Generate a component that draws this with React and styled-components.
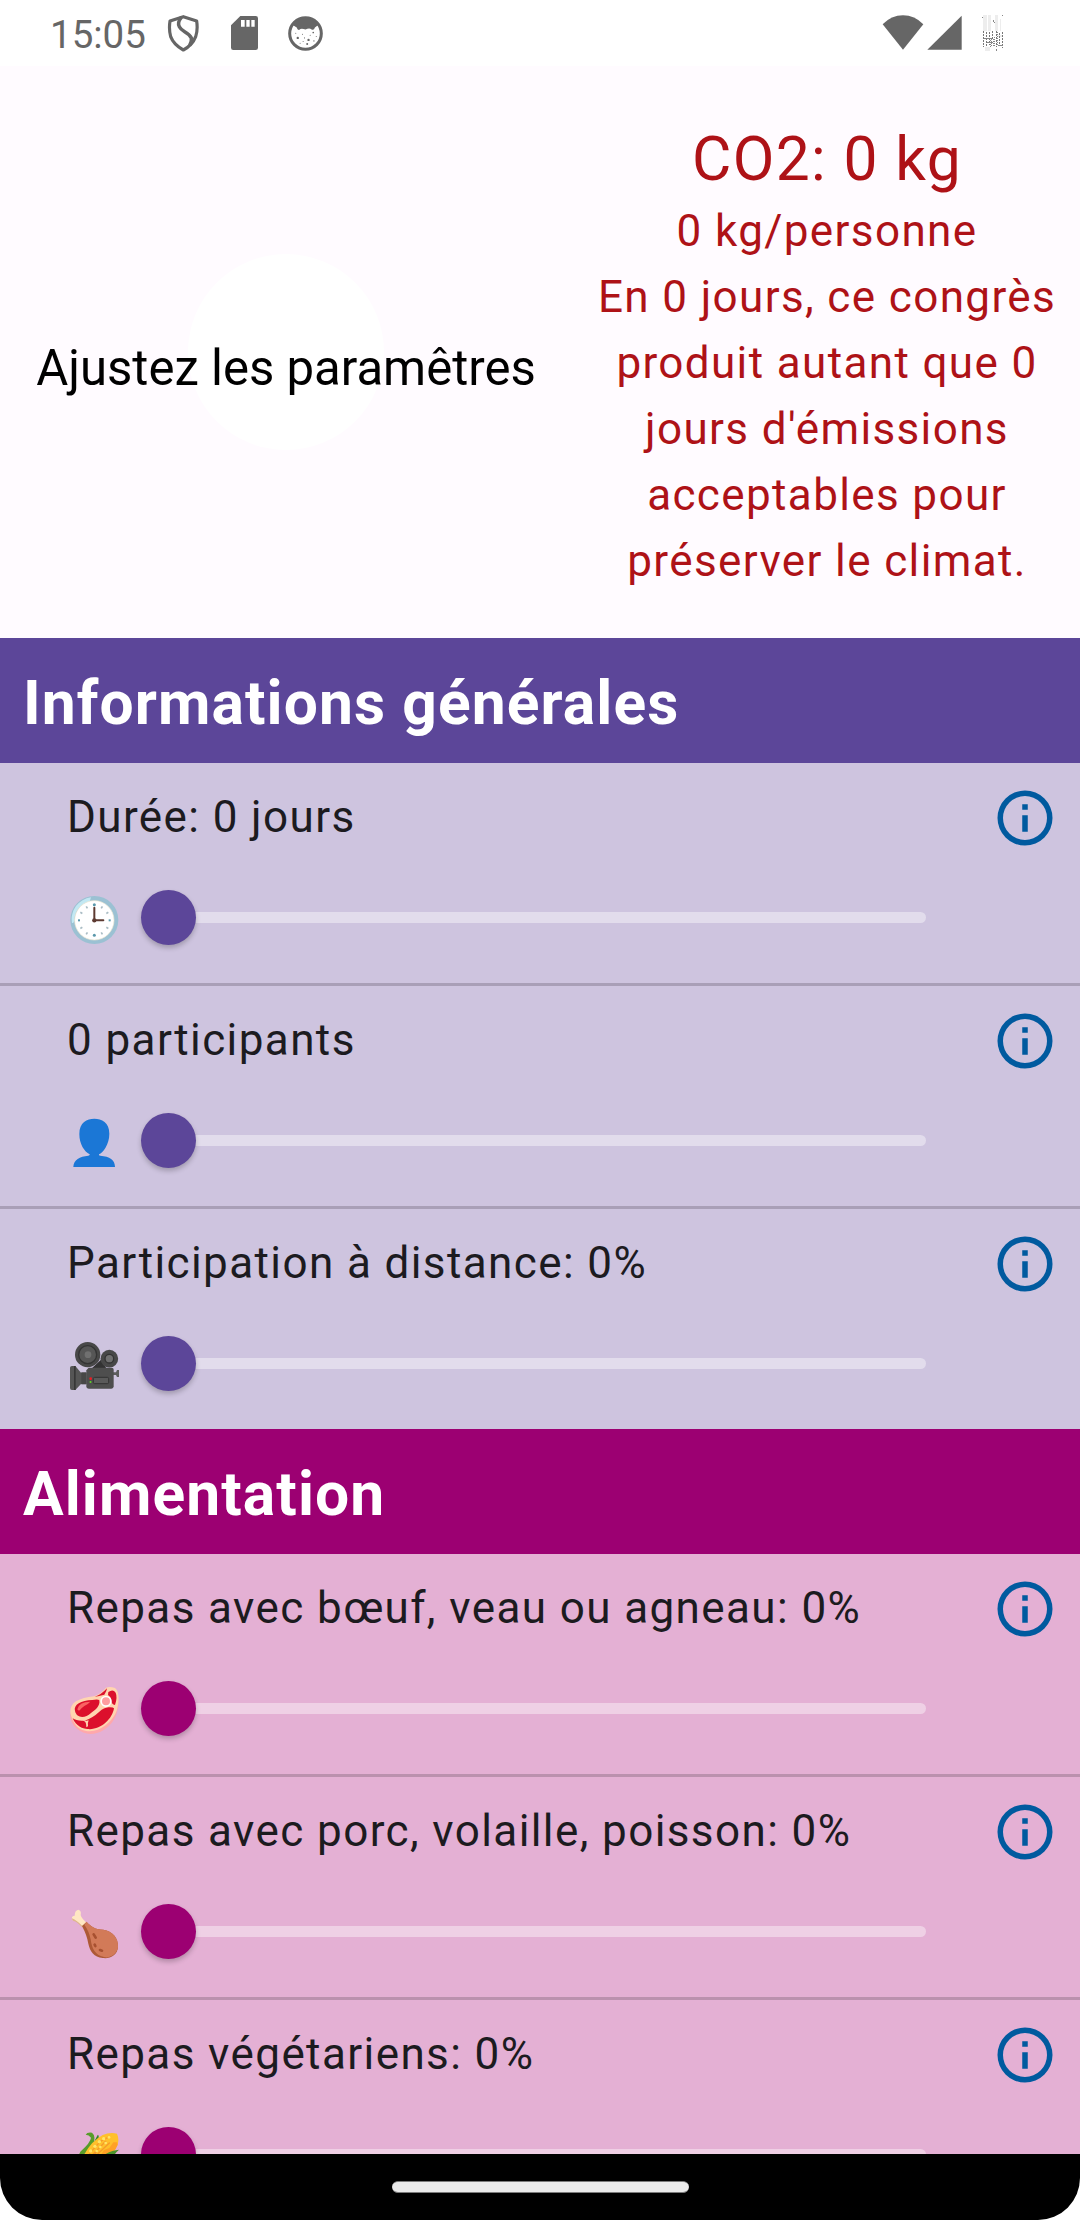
import React from 'react';
import styled, { createGlobalStyle } from 'styled-components';

const GlobalStyle = createGlobalStyle`
  * { box-sizing: border-box; }
  body { margin: 0; background: #fff; font-family: Roboto, "Noto Sans", sans-serif; }
  svg { display: block; flex: none; }
`;

const Screen = styled.div`
  width: 1080px;
  height: 2220px;
  display: flex;
  flex-direction: column;
  overflow: hidden;
  background: #fff;
`;

const StatusBar = styled.header`
  flex: none;
  height: 66px;
  display: flex;
  justify-content: space-between;
  padding: 0 76px 0 50px;
  color: #666;
`;

const StatusGroup = styled.div`
  display: flex;
  align-items: flex-start;
  padding-top: 14px;
`;

const Clock = styled.span`
  width: 117px;
  font-size: 38.5px;
  line-height: 41px;
`;

const StatusIcon = styled.svg`
  margin-top: ${(p) => p.$drop || 0}px;
  margin-right: ${(p) => p.$after || 0}px;
`;

const Content = styled.main`
  flex: 1;
  min-height: 0;
  overflow: hidden;
  display: flex;
  flex-direction: column;
  background: #fffbff;
`;

const Summary = styled.section`
  flex: none;
  display: flex;
  height: 572px;
`;

const ChartArea = styled.div`
  width: 572px;
  display: grid;
  place-items: center;
`;

const ChartHole = styled.div`
  grid-area: 1 / 1;
  width: 196px;
  height: 196px;
  border-radius: 50%;
  background: #fff;
`;

const ChartMessage = styled.div`
  grid-area: 1 / 1;
  padding-top: 32px;
  font-size: 49.1px;
  line-height: 58px;
  white-space: nowrap;
  color: #000;
`;

const Figures = styled.div`
  flex: 1;
  padding: 55px 19px 0 21px;
  text-align: center;
  color: #ae1217;
`;

const Total = styled.div`
  font-size: 60.5px;
  line-height: 77px;
  letter-spacing: 1.375px;
`;

const Detail = styled.p`
  margin: 0;
  font-size: 44px;
  line-height: 66px;
  letter-spacing: 1.375px;
`;

const SectionTitle = styled.h2`
  flex: none;
  margin: 0;
  height: 125px;
  padding: 25px 23px;
  background: ${(p) => p.$color};
  color: #fff;
  font-size: 60.5px;
  font-weight: 700;
  line-height: 82px;
  letter-spacing: 1.1px;
`;

const Rows = styled.div`
  flex: none;
  background: ${(p) => p.$color};
`;

const Row = styled.div`
  display: flex;
  justify-content: space-between;
  height: ${(p) => (p.$last ? 220 : 223)}px;
  padding: 21px 22px 0 66px;
  border-bottom: ${(p) => (p.$last ? '0' : `3px solid ${p.$line}`)};
`;

const Setting = styled.div`
  width: 860px;
`;

const Label = styled.div`
  padding-left: 1px;
  font-size: 44px;
  line-height: 66px;
  letter-spacing: 1.4px;
  white-space: nowrap;
  color: #1c1b1f;
`;

const SliderLine = styled.div`
  display: flex;
  align-items: center;
  height: 131px;
  margin-top: 2px;
`;

const Emoji = styled.svg`
  width: 50px;
  height: 50px;
  margin: 5px 22px 0 3px;
`;

const Thumb = styled.div`
  position: relative;
  flex: none;
  width: 55px;
  height: 55px;
  border-radius: 50%;
  background: ${(p) => p.$color};
  box-shadow: 0 3px 5px rgba(0, 0, 0, 0.22);
`;

const Track = styled.div`
  flex: 1;
  height: 11px;
  margin-left: -20px;
  border-radius: 6px;
  background: ${(p) => p.$color};
`;

const InfoButton = styled.button`
  width: 66px;
  height: 66px;
  margin-top: 1px;
  padding: 0;
  border: 0;
  background: none;
  color: #005a9f;
`;

const NavBar = styled.footer`
  flex: none;
  height: 66px;
  display: flex;
  align-items: center;
  justify-content: center;
  background: #000;
  border-radius: 0 0 42px 42px;
`;

const HomeHandle = styled.div`
  width: 297px;
  height: 12px;
  border-radius: 6px;
  background: #ebebeb;
  border: solid #7c7c7c;
  border-width: 1px 0;
`;

const ClockArt = () => (
  <>
    <circle cx="76" cy="75" r="72" fill="#9bc1d3" />
    <path d="M9 84 A66 66 0 0 1 66 7 L62 20 A56 56 0 0 0 17 66 Q16 84 11 84Z" fill="#c2e8f3" />
    <circle cx="76" cy="76" r="59" fill="#fff" stroke="#f2e9d2" strokeWidth="2" />
    <g fill="#5a98ab">
      <circle cx="76" cy="29" r="4.500" /><circle cx="76" cy="121" r="4.500" />
      <rect x="27" y="73" width="6" height="6" /><rect x="119" y="73" width="6" height="6" />
    </g>
    <g fill="#a9bcc4">
      {[30, 60, 120, 150, 210, 240, 300, 330].map((a) => (
        <rect key={a} x="73.500" y="27.500" width="5" height="7" transform={`rotate(${a} 76 76)`} />
      ))}
    </g>
    <path d="M76 38V76H103" fill="none" stroke="#5d3a31" strokeWidth="6" strokeLinecap="round" strokeLinejoin="round" />
    <circle cx="76" cy="76" r="6.500" fill="#5d3a31" />
  </>
);

const PersonArt = () => (
  <path
    fill="#1b77d6"
    d="M76 2C98 2 121 12 121 47C121 80 102 103 90 109Q88 113 94 113C122 115 138 126 138 146V147H13V146C14 126 32 115 58 113Q64 112 62 109C46 101 31 78 31 48C31 13 54 2 76 2Z"
  />
);

const CameraArt = () => (
  <>
    <path d="M70 80L96 56L112 82H72Z" fill="#333" />
    <circle cx="56" cy="41" r="38" fill="#484848" />
    <circle cx="56" cy="41" r="27" fill="#565656" stroke="#343434" strokeWidth="4" />
    <circle cx="57" cy="41" r="10" fill="#707070" />
    <circle cx="121" cy="53" r="26.500" fill="#484848" />
    <circle cx="121" cy="53" r="13" fill="#707070" stroke="#333" strokeWidth="4" />
    <path d="M3 80Q3 75 9 75H19L36 95H53V129H36L19 147H9Q3 147 3 141Z" fill="#555" />
    <path d="M15 75H20V147H15Z" fill="#373737" />
    <rect x="37" y="94" width="15" height="36" fill="#474747" />
    <path d="M132 94H141L144 87H150V108H144L141 102H132Z" fill="#5c5c5c" />
    <path d="M59 80H128Q134 80 134 86V136Q134 143 127 143H60Q52 143 52 136V88Z" fill="#4e4e4e" />
    <rect x="73" y="109" width="46" height="19" rx="4" fill="#5a5a5a" stroke="#333" strokeWidth="3" />
    <circle cx="65" cy="113" r="4" fill="#ef1c24" />
    <rect x="62" y="120" width="5" height="6" fill="#5dcc28" />
  </>
);

const MeatArt = () => (
  <>
    <path d="M5 78Q0 108 22 127Q58 158 103 133Q143 108 148 58Q152 18 128 4Z" fill="#ffa8ab" />
    <path d="M75 31Q98 22 111 5Q122 0 138 6C152 16 151 48 143 74C128 113 84 143 49 134C24 130 16 112 9 96C0 76 3 58 21 46Q42 34 75 31Z" fill="#ffd5b0" />
    <path d="M77 32Q96 27 114 7Q113 17 106 26L87 31Z" fill="#dc102c" />
    <path d="M18 75C13 56 36 43 70 42Q88 39 91 43C94 61 79 72 66 81C48 98 23 97 18 75Z" fill="#dc102c" />
    <path d="M118 18Q132 8 140 20Q146 34 138 57Q127 55 127 42Q125 31 117 27Z" fill="#dc102c" />
    <path d="M11 97Q23 106 47 104Q72 95 91 77Q105 65 118 64Q132 63 135 67C130 100 93 134 55 129C30 127 17 111 11 97Z" fill="#dc102c" />
    <path d="M41 102Q52 106 59 103Q56 108 57 121L52 124Q52 112 49 108Z" fill="#ffd5b0" />
    <path d="M25 70Q29 48 64 47Q58 54 46 60Q36 67 33 72Q28 76 25 70Z" fill="#fa6262" />
    <circle cx="111" cy="46" r="14.500" fill="#ff9d9f" stroke="#fff" strokeWidth="5" />
  </>
);

const DrumstickArt = () => (
  <>
    <path d="M9 29Q7 21 17 20Q17 4 28 2Q38 5 35 17Q34 23 54 43L40 55Q27 37 18 35Q10 36 9 29Z" fill="#ffe7c3" />
    <path d="M9 28Q20 32 43 53L39 55Q25 40 17 37Q9 36 9 28Z" fill="#dfb68c" />
    <path d="M53 38Q58 46 75 56Q82 60 103 62C130 65 149 88 147 114C145 139 124 150 101 147C75 144 63 128 58 104Q54 79 39 51Z" fill="#ad5936" />
    <path d="M53 38Q58 46 75 56Q82 60 103 62C130 65 149 88 147 114C145 133 126 147 108 145C77 140 68 116 65 91Q60 66 46 47Z" fill="#d27a58" />
    <g stroke="#a75030" strokeWidth="8" strokeLinecap="round">
      <path d="M74 76L80 86" /><path d="M77 107L79 111" /><path d="M93 123L99 125" />
    </g>
  </>
);

const CornArt = () => (
  <>
    <path d="M50 8Q54 0 69 2Q78 9 76 22L75 31L86 8Q91 11 88 23L80 45L50 80L20 90L34 59Q65 31 66 17Q60 8 50 8Z" fill="#579c2a" />
    <path d="M76 29L88 9V28L62 63H48L68 44Z" fill="#2b7b35" />
    <path d="M41 76Q65 28 101 9Q123 0 144 5Q151 21 146 38Q132 70 102 92H32Z" fill="#ffc02b" />
    <path d="M146 38Q135 66 102 92H80L105 54L121 48L133 31H144Z" fill="#ffa126" />
    <g stroke="#f69a2b" strokeWidth="4" strokeLinecap="round">
      <path d="M62 64L88 35M68 71L110 28M84 68L121 33M62 84L82 61M94 28L119 15" />
    </g>
    <g fill="#ffe568">
      <circle cx="91" cy="29" r="5" /><circle cx="78" cy="43" r="5" /><circle cx="65" cy="57" r="5" />
      <circle cx="104" cy="20" r="5" /><circle cx="94" cy="45" r="4" /><circle cx="83" cy="57" r="4" />
      <circle cx="120" cy="16" r="4" /><circle cx="110" cy="33" r="4" />
    </g>
    <path d="M150 53Q131 54 110 66L90 90H128Q133 67 150 53Z" fill="#4b942b" />
  </>
);

const InfoIcon = () => (
  <svg width="66" height="66" viewBox="0 0 24 24" fill="currentColor">
    <path d="M11 7h2v2h-2zM11 11h2v6h-2zM12 2a10 10 0 1 0 0 20a10 10 0 0 0 0-20zm0 18a8 8 0 1 1 0-16a8 8 0 0 1 0 16z" />
  </svg>
);

const ShieldIcon = () => (
  <StatusIcon width="32" height="38" viewBox="0 0 96 114" fill="none" stroke="currentColor" strokeWidth="9.500" strokeLinejoin="round" $after={32}>
    <path d="M49 8L89 21Q93 48 86 68Q76 94 49 108Q20 92 11 68Q5 46 9 21Z" />
    <path d="M43 10Q30 26 37 38Q41 46 53 53Q69 62 73 72Q75 82 68 94" strokeWidth="10.500" />
  </StatusIcon>
);

const SdIcon = () => (
  <StatusIcon width="27" height="34" viewBox="0 0 81 102" $after={30} $drop={2}>
    <path d="M28 0H74Q81 0 81 7V95Q81 102 74 102H7Q0 102 0 95V28Z" fill="currentColor" />
    <path d="M30 12H41V32H30ZM46 12H56V32H46ZM61 12H71V32H61Z" fill="#fff" />
  </StatusIcon>
);

const FaceIcon = () => (
  <StatusIcon width="35" height="35" viewBox="0 0 104 104" $drop={2}>
    <circle cx="52" cy="52" r="47" fill="#fff" stroke="currentColor" strokeWidth="9" />
    <path d="M14 27Q32 5 52 5Q73 5 90 27L80 34Q77 44 70 40Q64 35 52 40Q38 35 34 41Q28 43 26 34Z" fill="currentColor" />
    <g fill="currentColor">
      <circle cx="29" cy="65" r="3.500" /><circle cx="61" cy="71" r="3.500" /><circle cx="57" cy="83" r="3" />
      <circle cx="75" cy="49" r="2.500" /><circle cx="77" cy="74" r="2" /><circle cx="43" cy="54" r="1.500" />
      <circle cx="23" cy="51" r="1.500" /><circle cx="36" cy="81" r="1.500" /><circle cx="49" cy="65" r="1.500" />
      <circle cx="66" cy="57" r="1.500" /><circle cx="84" cy="61" r="1.500" /><circle cx="45" cy="76" r="1.500" />
    </g>
  </StatusIcon>
);

const WifiIcon = () => (
  <StatusIcon width="42" height="35" viewBox="0 0 126 105" $after={3} $drop={1}>
    <path d="M2 28Q28 1 63 1Q98 1 124 28L63 104Z" fill="currentColor" />
  </StatusIcon>
);

const SignalIcon = () => (
  <StatusIcon width="35" height="35" viewBox="0 0 105 105" $after={20} $drop={1}>
    <path d="M104 2V104H1Z" fill="currentColor" />
  </StatusIcon>
);

const BatteryIcon = () => (
  <StatusIcon width="22" height="37" viewBox="0 0 22 37" shapeRendering="crispEdges" $drop={1}>
    <path d="M1 0h4v16h-4zM6 0h3v16h-3zM13 0h3v16h-3zM3 32h5v4h-5zM16 20h5v2h-5zM18 4h1v12h-1z" fill="#ededed" />
    <path
      d="M1.500 16V32M4.500 17V31M7.500 17V30M10.500 16V24M14.500 16V32M17.500 18V29M20.500 17V33"
      stroke="#777" strokeDasharray="2 1" fill="none"
    />
    <path d="M8.500 25V32M9.500 24V32M11.500 24V32M12.500 22V31M15.500 17V31" stroke="#888" strokeDasharray="1 1" fill="none" />
    <path d="M0 2h1v1h-1zM20 0h1v1h-1zM11 5h1v2h-1zM12 7h1v1h-1zM2 23h8v1h-8zM5 27h6v1h-6zM14 34h1v2h-1zM16 30h5v1h-5z" fill="#888" />
  </StatusIcon>
);

const sections = [
  {
    title: 'Informations générales',
    main: '#5c4699',
    light: '#cec4df',
    line: '#a99fb7',
    track: '#e2dcec',
    rows: [
      { label: 'Durée: 0 jours', Art: ClockArt },
      { label: '0 participants', Art: PersonArt },
      { label: 'Participation à distance: 0%', Art: CameraArt },
    ],
  },
  {
    title: 'Alimentation',
    main: '#9c0072',
    light: '#e4b0d4',
    line: '#bb91ae',
    track: '#efd0e5',
    rows: [
      { label: 'Repas avec bœuf, veau ou agneau: 0%', Art: MeatArt },
      { label: 'Repas avec porc, volaille, poisson: 0%', Art: DrumstickArt },
      { label: 'Repas végétariens: 0%', Art: CornArt },
    ],
  },
];

export default function App() {
  return (
    <Screen>
      <GlobalStyle />
      <StatusBar>
        <StatusGroup>
          <Clock>15:05</Clock>
          <ShieldIcon />
          <SdIcon />
          <FaceIcon />
        </StatusGroup>
        <StatusGroup>
          <WifiIcon />
          <SignalIcon />
          <BatteryIcon />
        </StatusGroup>
      </StatusBar>
      <Content>
        <Summary>
          <ChartArea>
            <ChartHole />
            <ChartMessage>Ajustez les paramêtres</ChartMessage>
          </ChartArea>
          <Figures>
            <Total>CO2: 0 kg</Total>
            <Detail>0 kg/personne</Detail>
            <Detail>
              En 0 jours, ce congrès produit autant que 0 jours d'émissions acceptables pour préserver le climat.
            </Detail>
          </Figures>
        </Summary>
        {sections.map((section) => (
          <React.Fragment key={section.title}>
            <SectionTitle $color={section.main}>{section.title}</SectionTitle>
            <Rows $color={section.light}>
              {section.rows.map(({ label, Art }, i) => (
                <Row key={label} $line={section.line} $last={i === section.rows.length - 1}>
                  <Setting>
                    <Label>{label}</Label>
                    <SliderLine>
                      <Emoji viewBox="0 0 150 150">
                        <Art />
                      </Emoji>
                      <Thumb $color={section.main} />
                      <Track $color={section.track} />
                    </SliderLine>
                  </Setting>
                  <InfoButton aria-label="Information">
                    <InfoIcon />
                  </InfoButton>
                </Row>
              ))}
            </Rows>
          </React.Fragment>
        ))}
      </Content>
      <NavBar>
        <HomeHandle />
      </NavBar>
    </Screen>
  );
}
